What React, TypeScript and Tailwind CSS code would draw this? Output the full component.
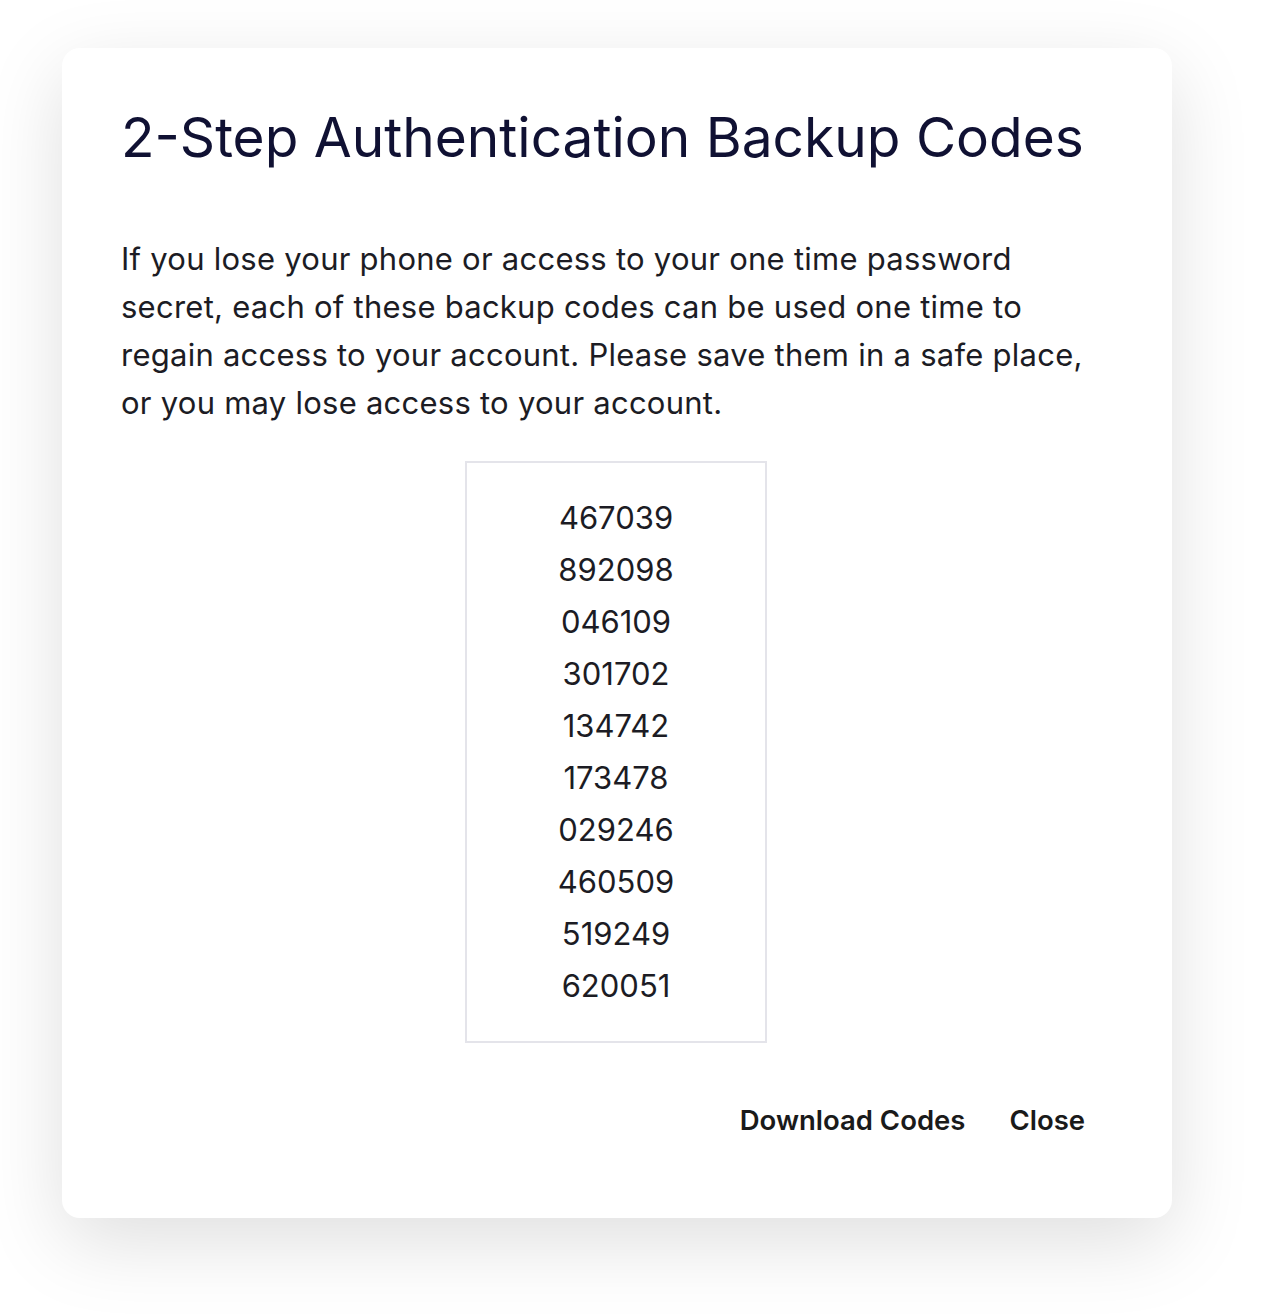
import React from 'react';

const codes = [
  '467039',
  '892098',
  '046109',
  '301702',
  '134742',
  '173478',
  '029246',
  '460509',
  '519249',
  '620051',
];

export default function App() {
  return (
    <div className="h-[1314px] w-full overflow-hidden bg-white pt-[48px] pl-[62px] font-['Inter',sans-serif]">
      <div className="w-[1110px] h-[1170px] rounded-[18px] bg-white shadow-[0_24px_80px_rgba(0,0,0,0.13)] px-[59px] pt-[62px]">
        <h1 className="text-[55px] leading-none font-normal text-[#101133]">
          2-Step Authentication Backup Codes
        </h1>

        <p className="mt-[70px] max-w-[975px] text-[31px] leading-[48px] tracking-[0.25px] text-[#1c1c24]">
          If you lose your phone or access to your one time password secret, each of these backup codes can be used one time to regain access to your account. Please save them in a safe place, or you may lose access to your account.
        </p>

        <div className="flex justify-center mt-[34px] pr-[2px]">
          <div className="w-[302px] border-2 border-[#e4e4ea] py-[29px] flex flex-col items-center">
            {codes.map((code) => (
              <div key={code} className="text-[31px] leading-[52px] text-[#1c1c24]">
                {code}
              </div>
            ))}
          </div>
        </div>

        <div className="flex justify-end gap-[44px] mt-[57px] pr-[28px]">
          <button className="text-[27.5px] font-semibold text-[#1a1a1a]">Download Codes</button>
          <button className="text-[27.5px] font-semibold text-[#1a1a1a]">Close</button>
        </div>
      </div>
    </div>
  );
}
